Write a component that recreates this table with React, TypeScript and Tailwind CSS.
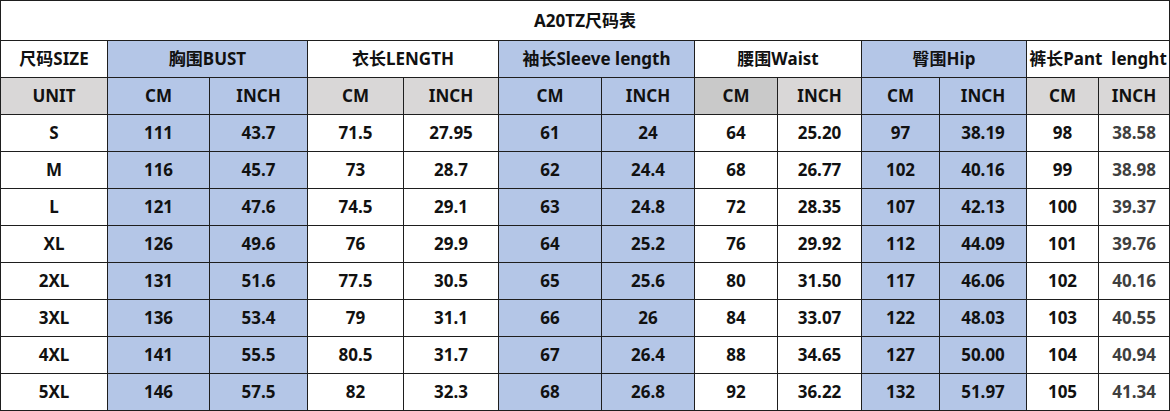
const cols = [107, 102, 98, 96, 95, 103, 93, 83, 84, 78, 87, 72, 71];

const BLUE = "bg-[#b4c6e7]";
const GRAY = "bg-[#d9d7d7]";
const DARK = "bg-[#c9c9c9]";

const groups = [
  { label: "胸围BUST", bg: BLUE },
  { label: "衣长LENGTH", bg: "bg-white" },
  { label: "袖长Sleeve length", bg: BLUE },
  { label: "腰围Waist", bg: "bg-white" },
  { label: "臀围Hip", bg: BLUE },
  { label: "裤长Pant  lenght", bg: "bg-white" },
];

const unitBg = [GRAY, BLUE, BLUE, GRAY, GRAY, BLUE, BLUE, DARK, GRAY, BLUE, BLUE, GRAY, GRAY];
const dataBg = ["bg-white", BLUE, BLUE, "bg-white", "bg-white", BLUE, BLUE, "bg-white", "bg-white", BLUE, BLUE, "bg-white", "bg-white"];

const rows = [
  ["S", "111", "43.7", "71.5", "27.95", "61", "24", "64", "25.20", "97", "38.19", "98", "38.58"],
  ["M", "116", "45.7", "73", "28.7", "62", "24.4", "68", "26.77", "102", "40.16", "99", "38.98"],
  ["L", "121", "47.6", "74.5", "29.1", "63", "24.8", "72", "28.35", "107", "42.13", "100", "39.37"],
  ["XL", "126", "49.6", "76", "29.9", "64", "25.2", "76", "29.92", "112", "44.09", "101", "39.76"],
  ["2XL", "131", "51.6", "77.5", "30.5", "65", "25.6", "80", "31.50", "117", "46.06", "102", "40.16"],
  ["3XL", "136", "53.4", "79", "31.1", "66", "26", "84", "33.07", "122", "48.03", "103", "40.55"],
  ["4XL", "141", "55.5", "80.5", "31.7", "67", "26.4", "88", "34.65", "127", "50.00", "104", "40.94"],
  ["5XL", "146", "57.5", "82", "32.3", "68", "26.8", "92", "36.22", "132", "51.97", "105", "41.34"],
];

const units = ["UNIT", "CM", "INCH", "CM", "INCH", "CM", "INCH", "CM", "INCH", "CM", "INCH", "CM", "INCH"];

const cell = "border border-[#1e1e1e] p-0 text-center align-middle";

export default function App() {
  return (
    <div
      className="w-[1170px] h-[411px] bg-white overflow-hidden text-[17px] font-bold text-[#111]"
      style={{ fontFamily: '"Noto Sans", "Noto Sans CJK SC", sans-serif' }}
    >
      <table className="border-collapse table-fixed w-[1169px]">
        <colgroup>
          {cols.map((w, i) => (
            <col key={i} style={{ width: w }} />
          ))}
        </colgroup>
        <tbody>
          <tr className="h-[40px]">
            <td colSpan={13} className={`${cell} bg-white`}>
              A20TZ尺码表
            </td>
          </tr>
          <tr className="h-[37px]">
            <td className={`${cell} bg-white`}>尺码SIZE</td>
            {groups.map((g) => (
              <td key={g.label} colSpan={2} className={`${cell} ${g.bg} whitespace-pre`}>
                {g.label}
              </td>
            ))}
          </tr>
          <tr className="h-[37px]">
            {units.map((u, i) => (
              <td key={i} className={`${cell} ${unitBg[i]}`}>
                {u}
              </td>
            ))}
          </tr>
          {rows.map((r) => (
            <tr key={r[0]} className="h-[37px]">
              {r.map((v, i) => (
                <td key={i} className={`${cell} ${dataBg[i]} ${i === 12 ? "text-[#3f3f3f]" : ""}`}>
                  {v}
                </td>
              ))}
            </tr>
          ))}
        </tbody>
      </table>
    </div>
  );
}
